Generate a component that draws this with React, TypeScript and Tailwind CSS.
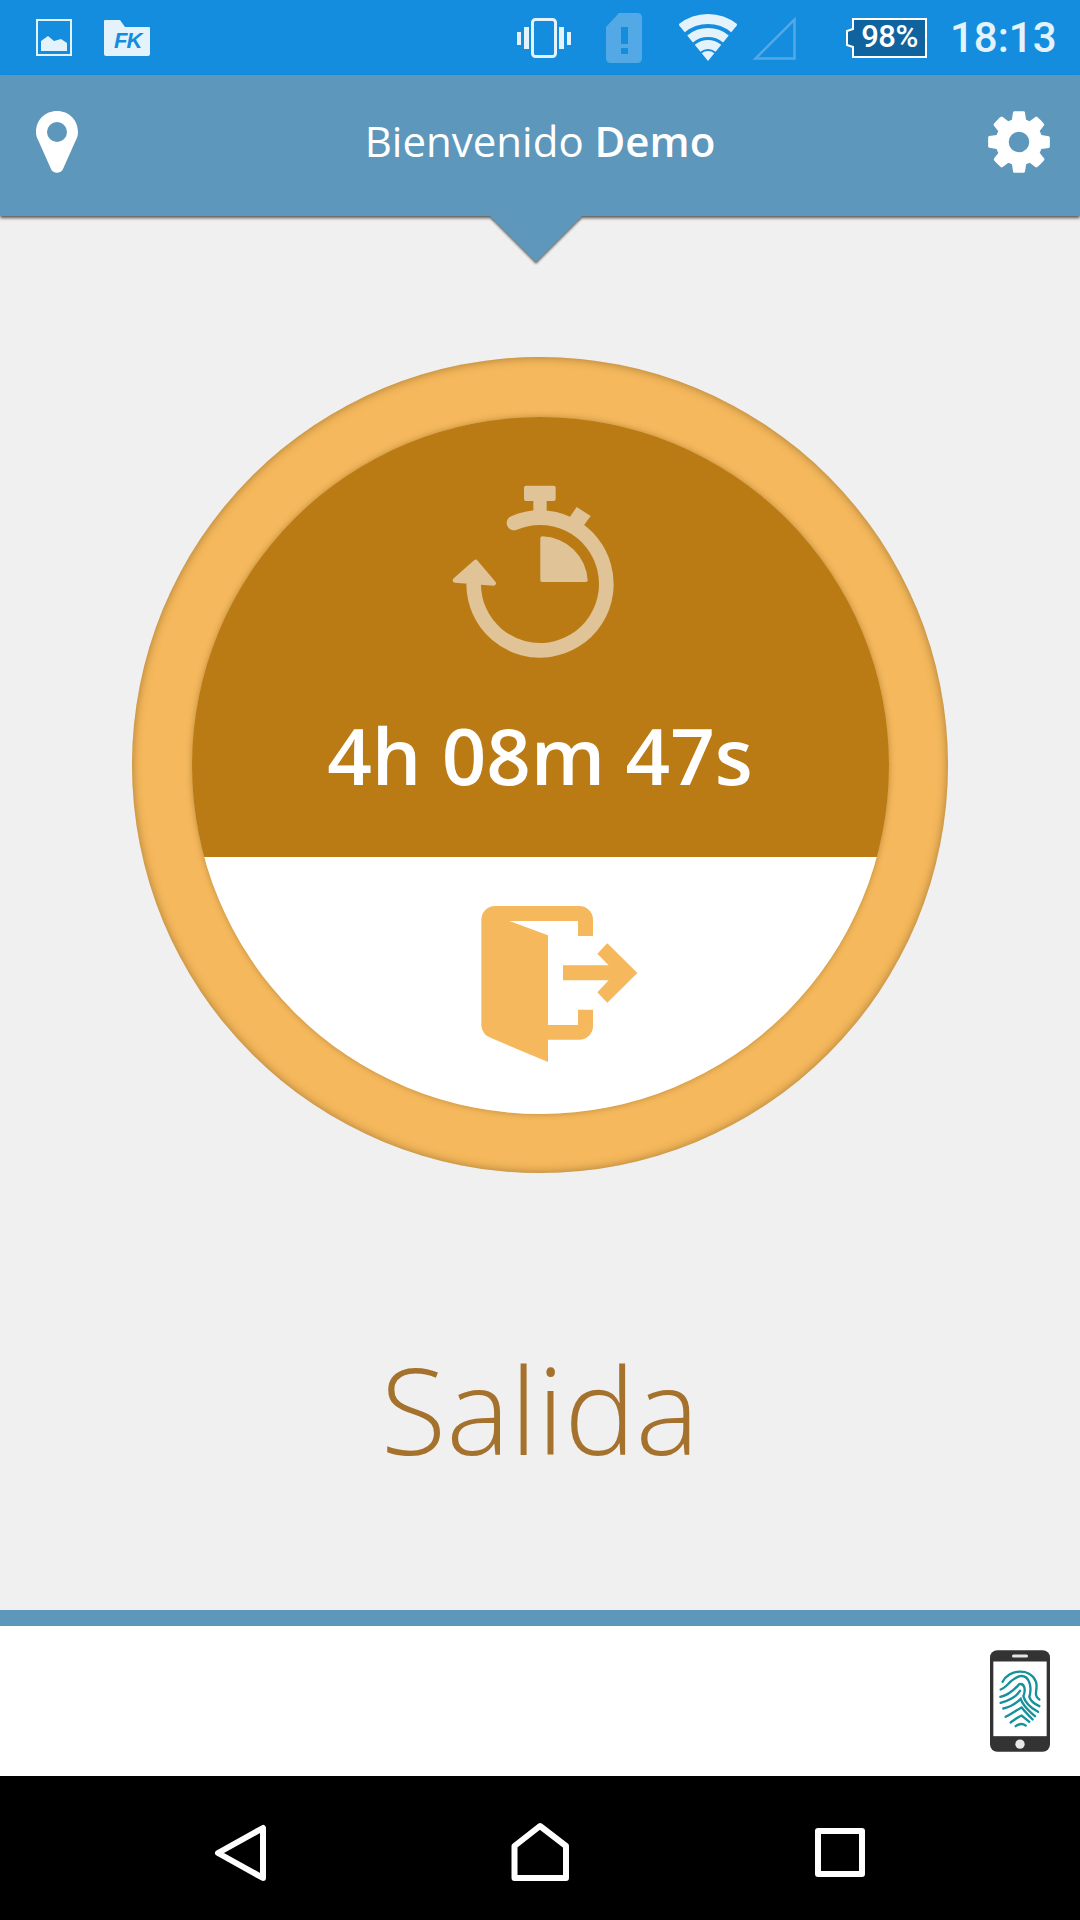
import React from "react";

function ImageIcon() {
  return (
    <svg width="36" height="37" viewBox="0 0 36 37">
      <rect x="1" y="1" width="34" height="35" fill="none" stroke="#e3f2fb" strokeWidth="2" />
      <path d="M5 22 L12 17 L18 22 L25 20 L31 24 V32 H5 Z" fill="#e3f2fb" />
    </svg>
  );
}

function FolderIcon() {
  return (
    <div className="relative w-[46px] h-[36px]">
      <svg width="46" height="36" viewBox="0 0 46 36" className="absolute inset-0">
        <path d="M1 0 H16 L21 7 H45 Q46 7 46 8 V34 Q46 36 44 36 H2 Q0 36 0 34 V1 Q0 0 1 0 Z" fill="#e3f2fb" />
      </svg>
      <span className="absolute left-[10px] top-[12px] text-[22px] leading-[17px] font-bold italic text-[#148dde] font-['Liberation_Sans',sans-serif] tracking-[-1px]">
        FK
      </span>
    </div>
  );
}

function VibrateIcon() {
  return (
    <svg width="54" height="40" viewBox="0 0 54 40">
      <rect x="15.5" y="1.5" width="23" height="37" rx="3" fill="none" stroke="#e3f2fb" strokeWidth="3" />
      <rect x="0" y="14" width="4" height="13" fill="#e3f2fb" />
      <rect x="7" y="9" width="5" height="22" fill="#e3f2fb" />
      <rect x="42" y="9" width="5" height="22" fill="#e3f2fb" />
      <rect x="50" y="14" width="4" height="13" fill="#e3f2fb" />
    </svg>
  );
}

function SimIcon() {
  return (
    <svg width="36" height="50" viewBox="0 0 36 50">
      <path d="M13 0 H31 Q36 0 36 5 V45 Q36 50 31 50 H5 Q0 50 0 45 V14 Z" fill="#52a9e6" />
      <rect x="15" y="14" width="7" height="17" fill="#148dde" />
      <rect x="15" y="35" width="7" height="6" fill="#148dde" />
    </svg>
  );
}

function WifiIcon() {
  return (
    <svg width="58" height="47" viewBox="0 0 58 47" fill="none" stroke="#e3f2fb">
      <path d="M2.6 14.4 A42 42 0 0 1 55.4 14.4" strokeWidth="10" />
      <path d="M11.1 24.9 A28.5 28.5 0 0 1 46.9 24.9" strokeWidth="9" />
      <path d="M18.6 34.2 A16.5 16.5 0 0 1 39.4 34.2" strokeWidth="9" />
      <path d="M29 47 L22.7 39.2 A10 10 0 0 1 35.3 39.2 Z" fill="#e3f2fb" stroke="none" />
    </svg>
  );
}

function SignalIcon() {
  return (
    <svg width="44" height="44" viewBox="0 0 44 44">
      <path d="M42.5 3.5 V42.5 H3.5 Z" fill="none" stroke="#52a9e6" strokeWidth="2.5" />
    </svg>
  );
}

function BatteryBadge() {
  return (
    <div className="relative w-[81px] h-[40px] flex items-center justify-center pl-[6px] text-white text-[31px] font-medium tracking-[-0.5px] font-['Roboto',sans-serif]">
      <svg width="81" height="40" viewBox="0 0 81 40" className="absolute inset-0">
        <path d="M7 1 H80 V39 H7 V29 L1 27 V13 L7 11 Z" fill="#0f649f" stroke="#fff" strokeWidth="2" />
      </svg>
      <span className="relative">98%</span>
    </div>
  );
}

function PinIcon() {
  return (
    <svg width="42" height="62" viewBox="0 0 42 62">
      <path
        fillRule="evenodd"
        d="M21 0 C33 0 42 9 42 21 C42 25 41 27 39 31 L27 58 C25 63 17 63 15 58 L3 31 C1 27 0 25 0 21 C0 9 9 0 21 0 Z M21 11 A10 10 0 1 0 21 31 A10 10 0 1 0 21 11 Z"
        fill="#fff"
      />
    </svg>
  );
}

function GearIcon() {
  return (
    <svg width="72" height="72" viewBox="0 0 1792 1792" fill="#fff">
      <path d="M1152 896q0-106-75-181t-181-75-181 75-75 181 75 181 181 75 181-75 75-181zm512-109v222q0 12-8 23t-20 13l-185 28q-19 54-39 91 35 50 107 138 10 12 10 25t-9 23q-27 37-99 108t-94 71q-12 0-26-9l-138-108q-44 23-91 38-16 136-29 186-7 28-36 28h-222q-14 0-24.5-8.5t-11.5-21.5l-28-184q-49-16-90-37l-141 107q-10 9-25 9-14 0-25-11-126-114-165-168-7-10-7-23 0-12 8-23 15-21 51-66.5t54-70.5q-27-50-41-99l-183-27q-13-2-21-12.5t-8-23.5v-222q0-12 8-23t19-13l186-28q14-46 39-92-40-57-107-138-10-12-10-24 0-10 9-23 26-36 98.5-107.5t94.5-71.5q13 0 26 10l138 107q44-23 91-38 16-136 29-186 7-28 36-28h222q14 0 24.5 8.5t11.5 21.5l28 184q49 16 90 37l142-107q9-9 24-9 13 0 25 10 129 119 165 170 7 8 7 22 0 12-8 23-15 21-51 66.5t-54 70.5q26 50 41 98l183 28q13 2 21 12.5t8 23.5z" />
    </svg>
  );
}

function StopwatchIcon() {
  return (
    <svg width="220" height="220" viewBox="0 0 660 660" fill="#e0c396" className="shrink-0 mr-[20px]">
      <rect x="312" y="74" width="95" height="46" rx="6" />
      <rect x="340" y="110" width="40" height="50" />
      <path d="M470 138 L512 165 L488 198 L448 170 Z" />
      <path d="M282 186 A199 199 0 1 1 161 372" fill="none" stroke="#e0c396" strokeWidth="44" strokeLinecap="round" />
      <path d="M105 358 L167 303 L221 367 Z" stroke="#e0c396" strokeWidth="14" strokeLinejoin="round" />
      <path d="M361 232 Q361 226 367 226 A140 140 0 0 1 503 358 Q503 363 498 363 H366 Q361 363 361 358 Z" />
    </svg>
  );
}

function ExitIcon() {
  return (
    <svg width="200" height="190" viewBox="0 0 600 570" fill="#f5b85c" className="shrink-0 ml-[20px]">
      <path d="M135 75 H388 A41 41 0 0 1 429 116 V165 H384 V120 H178 L294 163 V432 H384 V386 H429 V435 A41 41 0 0 1 388 476 H294 V543 L125 472 A45 45 0 0 1 94 435 V116 A41 41 0 0 1 135 75 Z" />
      <path d="M339 253 H476 L442 218 L472 187 L562 276 L472 365 L442 334 L476 298 H339 Z" />
    </svg>
  );
}

function FingerprintPhone() {
  return (
    <svg width="60" height="102" viewBox="90 150 180 305">
      <rect x="90" y="150" width="180" height="305" rx="22" fill="#333" />
      <rect x="100" y="184" width="160" height="224" fill="#fff" />
      <rect x="156" y="163" width="48" height="9" rx="4.5" fill="#e4e4e4" />
      <circle cx="180" cy="432" r="14" fill="#e8e8e8" />
      <g fill="none" stroke="#15919b" strokeWidth="7" strokeLinecap="round">
        <path d="M128 245 C145 208 210 200 228 245 C235 268 218 285 238 298" />
        <path d="M122 268 C142 262 150 236 180 228 C205 224 218 255 208 290 C212 305 225 312 238 318" />
        <path d="M121 290 C150 285 165 265 178 252 C194 248 198 270 190 288 C196 310 215 325 234 335" />
        <path d="M122 308 C150 300 170 288 180 272" />
        <path d="M130 325 C155 320 170 308 182 296 C190 320 210 335 225 348" />
        <path d="M137 350 C155 340 170 330 185 322 C195 335 205 345 218 358" />
        <path d="M152 367 C165 358 175 350 185 346 L208 365" />
        <path d="M167 378 C175 372 185 368 197 376" />
      </g>
    </svg>
  );
}

export default function App() {
  return (
    <div className="w-[1080px] h-[1920px] flex flex-col bg-[#f0f0f0] overflow-hidden font-['Open_Sans',sans-serif]">
      {/* status bar */}
      <div className="h-[75px] shrink-0 bg-[#148dde] flex items-center pl-[36px]">
        <ImageIcon />
        <div className="ml-[32px]">
          <FolderIcon />
        </div>
        <div className="ml-[367px]">
          <VibrateIcon />
        </div>
        <div className="ml-[35px]">
          <SimIcon />
        </div>
        <div className="ml-[37px]">
          <WifiIcon />
        </div>
        <div className="ml-[15px]">
          <SignalIcon />
        </div>
        <div className="ml-[50px]">
          <BatteryBadge />
        </div>
        <span className="ml-[23px] text-[42px] leading-none font-medium text-[#e3f2fb] font-['Roboto',sans-serif]">18:13</span>
      </div>

      {/* header */}
      <header className="relative z-10 h-[141px] shrink-0 bg-[#5d97bc] flex items-center pb-[8px] shadow-[0_2px_3px_rgba(0,0,0,0.65)]">
        <div className="w-[150px] pl-[36px]">
          <PinIcon />
        </div>
        <h1 className="flex-1 text-center text-[42px] leading-none text-white font-normal -mt-[2px]">
          Bienvenido <span className="font-semibold">Demo</span>
        </h1>
        <div className="w-[150px] pr-[25px] flex justify-end">
          <GearIcon />
        </div>
        <svg
          width="92"
          height="48"
          viewBox="0 0 92 48"
          className="absolute left-[490px] top-[141px] drop-shadow-[0_2px_1px_rgba(0,0,0,0.55)]"
        >
          <path d="M0 0 H92 L46 46 Z" fill="#5d97bc" />
        </svg>
      </header>

      {/* main */}
      <main className="flex-1 flex flex-col items-center pt-[141px]">
        <div className="w-[816px] h-[816px] shrink-0 rounded-full bg-[#f5b85c] flex items-center justify-center shadow-[inset_0_0_10px_rgba(100,70,20,0.55)]">
          <div className="w-[697px] h-[697px] rounded-full overflow-hidden flex flex-col shadow-[0_0_6px_rgba(100,70,20,0.4)]">
            <div className="h-[440px] shrink-0 bg-[#ba7a14] flex flex-col items-center pt-[44px]">
              <StopwatchIcon />
              <div className="mt-[24px] text-[78px] leading-[100px] font-semibold text-white whitespace-nowrap">
                4h 08m 47s
              </div>
            </div>
            <div className="flex-1 bg-white flex flex-col items-center pt-[24px]">
              <ExitIcon />
            </div>
          </div>
        </div>
        <div className="mt-[156px] text-[120px] leading-[160px] font-light text-[#a5722d]">Salida</div>
      </main>

      {/* footer */}
      <footer className="h-[166px] shrink-0 bg-white border-t-[16px] border-[#5d97bc] flex items-center justify-end pr-[30px]">
        <FingerprintPhone />
      </footer>

      {/* nav bar */}
      <nav className="h-[144px] shrink-0 bg-black grid grid-cols-3 px-[90px] pt-2 place-items-center">
        <svg width="60" height="64" viewBox="0 0 60 64" fill="none" stroke="#fff" strokeWidth="6" strokeLinejoin="round">
          <path d="M53 8 V58 L8 33 Z" />
        </svg>
        <svg width="60" height="64" viewBox="0 0 60 64" fill="none" stroke="#fff" strokeWidth="6" strokeLinejoin="round">
          <path d="M30 6 L56 26 V58 H4.5 V26 Z" />
        </svg>
        <svg width="60" height="64" viewBox="0 0 60 64" fill="none" stroke="#fff" strokeWidth="6" strokeLinejoin="round">
          <rect x="8" y="11" width="44" height="43" />
        </svg>
      </nav>
    </div>
  );
}
